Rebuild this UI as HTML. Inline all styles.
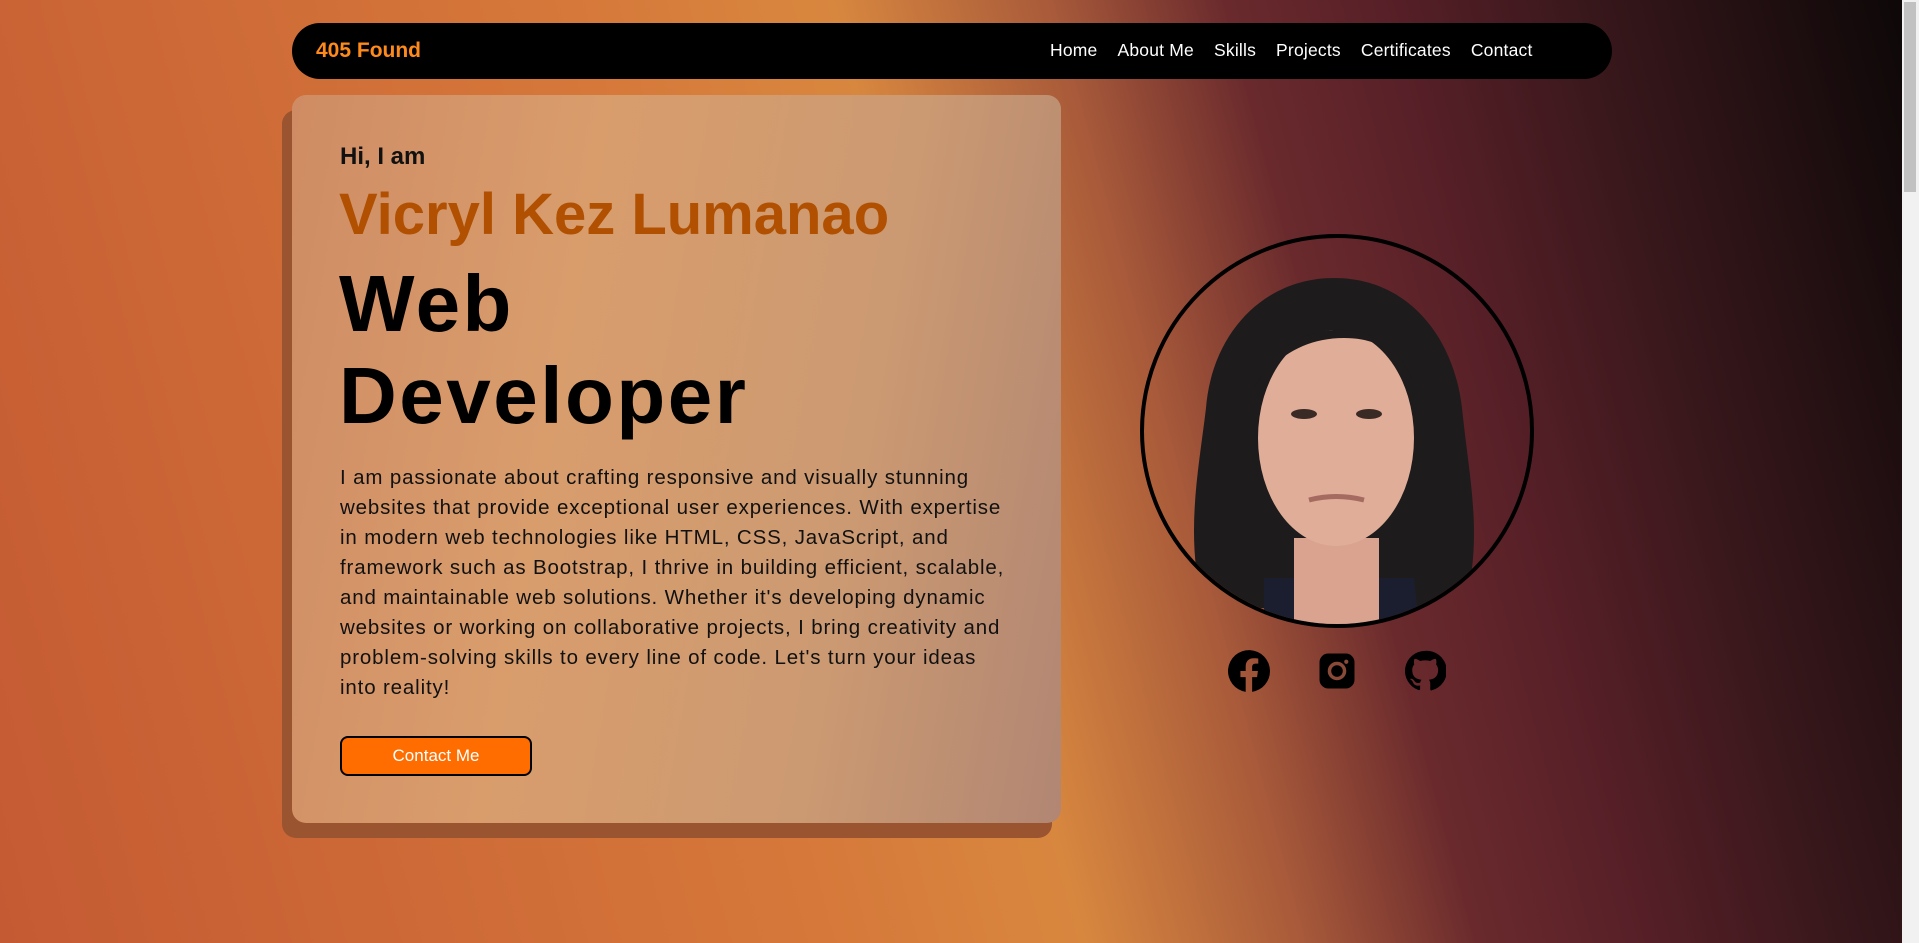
<!DOCTYPE html>
<html><head><meta charset="utf-8"><style>
*{margin:0;padding:0;box-sizing:border-box}
html,body{width:1919px;height:943px;overflow:hidden}
body{font-family:"Liberation Sans",sans-serif;position:relative;
background:linear-gradient(75deg,#c45a33 0%,#d6783a 38%,#d8873f 50%,#a85a3a 60%,#6a2a2d 68%,#561f27 76%,#3a181c 84%,#0b0707 100%);}
.sb{position:absolute;right:0;top:0;width:17px;height:943px;background:#f1f1f1}
.sb div{position:absolute;left:2px;top:2px;width:12px;height:190px;background:#c1c1c1}
nav{position:absolute;left:292px;top:23px;width:1320px;height:56px;background:#000;border-radius:28px}
.logo{position:absolute;left:24px;top:16px;color:#ff8a1c;font-weight:bold;font-size:21px}
.links{position:absolute;left:758px;top:17px;color:#fff;font-size:17.5px;white-space:nowrap;letter-spacing:.2px}
.links span{margin-right:20px}
.shadow{position:absolute;left:282px;top:110px;width:770px;height:728px;background:#9a5430;border-radius:14px}
.card{position:absolute;left:292px;top:95px;width:769px;height:728px;border-radius:14px;
background:linear-gradient(100deg,#cf8c64 0%,#d99d6c 35%,#cc9a72 70%,#b18673 100%)}
.hi{position:absolute;left:48px;top:48px;font-weight:bold;font-size:24px;color:#111}
.name{position:absolute;left:47px;top:86px;font-weight:bold;font-size:58px;color:#b05000;white-space:nowrap}
.role{position:absolute;left:47px;top:163px;font-weight:bold;font-size:80px;line-height:92px;color:#000;letter-spacing:2.5px}
.p{position:absolute;left:48px;top:368px;font-size:20.5px;line-height:30px;color:#111;white-space:nowrap;letter-spacing:.85px}
.btn{position:absolute;left:48px;top:641px;width:192px;height:40px;background:#ff6d00;border:2px solid #000;border-radius:8px;color:#fff;font-size:17px;text-align:center;line-height:36px}
.photo{position:absolute;left:1140px;top:234px;width:394px;height:394px;border-radius:50%;border:4px solid #000;overflow:hidden}
.ic{position:absolute;top:650px;width:42px;height:42px}
</style></head><body>
<nav><div class="logo">405 Found</div>
<div class="links"><span>Home</span><span>About Me</span><span>Skills</span><span>Projects</span><span>Certificates</span><span>Contact</span></div></nav>
<div class="shadow"></div>
<div class="card">
<div class="hi">Hi, I am</div>
<div class="name">Vicryl Kez Lumanao</div>
<div class="role">Web<br>Developer</div>
<div class="p">I am passionate about crafting responsive and visually stunning<br>websites that provide exceptional user experiences. With expertise<br>in modern web technologies like HTML, CSS, JavaScript, and<br>framework such as Bootstrap, I thrive in building efficient, scalable,<br>and maintainable web solutions. Whether it's developing dynamic<br>websites or working on collaborative projects, I bring creativity and<br>problem-solving skills to every line of code. Let's turn your ideas<br>into reality!</div>
<div class="btn">Contact Me</div>
</div>
<div class="photo"><svg width="386" height="386" viewBox="0 0 386 386">
<path d="M60 370 C40 300 55 230 62 170 C68 95 120 40 190 40 C265 40 310 100 318 170 C325 240 340 300 320 370 Z" fill="#1e1b1c"/>
<path d="M120 386 L120 340 L270 340 L275 386Z" fill="#1a1e2e"/>
<path d="M150 300 L150 386 L235 386 L235 300Z" fill="#d9a38f"/>
<ellipse cx="192" cy="200" rx="78" ry="108" fill="#e0ad98"/>
<path d="M110 150 C130 110 160 90 200 92 C240 92 262 120 272 150 C260 120 240 100 200 100 C160 100 130 120 110 150Z" fill="#1e1b1c"/>
<ellipse cx="160" cy="176" rx="13" ry="5" fill="#3a2a26"/><ellipse cx="225" cy="176" rx="13" ry="5" fill="#3a2a26"/>
<path d="M165 262 Q192 255 220 262" stroke="#a56a60" stroke-width="5" fill="none"/>
</svg></div>
<svg class="ic" style="left:1228px" viewBox="0 0 24 24"><path fill="#000" d="M24 12a12 12 0 1 0-13.9 11.9v-8.4H7.1V12h3V9.4c0-3 1.8-4.7 4.5-4.7 1.3 0 2.7.2 2.7.2v2.9h-1.5c-1.5 0-2 .9-2 1.9V12h3.3l-.5 3.5h-2.8v8.4A12 12 0 0 0 24 12z"/></svg>
<svg class="ic" style="left:1316px" viewBox="0 0 24 24"><rect x="2" y="2" width="20" height="20" rx="5" fill="#000"/><circle cx="12" cy="12" r="4.3" fill="none" stroke="#8a4a38" stroke-width="2"/><circle cx="17.3" cy="6.7" r="1.2" fill="#8a4a38"/></svg>
<svg class="ic" style="left:1404px" viewBox="0 0 24 24"><path fill="#000" d="M12 .5a11.5 11.5 0 0 0-3.6 22.4c.6.1.8-.3.8-.6v-2c-3.2.7-3.900-1.5-3.900-1.5-.5-1.3-1.300-1.7-1.3-1.7-1-.7.1-.7.1-.7 1.2.1 1.8 1.2 1.8 1.2 1 1.8 2.7 1.3 3.4 1 .1-.8.4-1.3.7-1.600-2.6-.3-5.3-1.3-5.3-5.7 0-1.3.5-2.3 1.2-3.1-.1-.3-.5-1.5.1-3.1 0 0 1-.3 3.2 1.2a11 11 0 0 1 5.8 0c2.2-1.5 3.200-1.2 3.2-1.2.6 1.6.2 2.8.1 3.1.7.8 1.2 1.9 1.2 3.1 0 4.4-2.7 5.4-5.3 5.7.4.4.8 1.1.8 2.2v3.3c0 .3.2.7.8.6A11.5 11.5 0 0 0 12 .5z"/></svg>
<div class="sb"><div></div></div>
</body></html>
